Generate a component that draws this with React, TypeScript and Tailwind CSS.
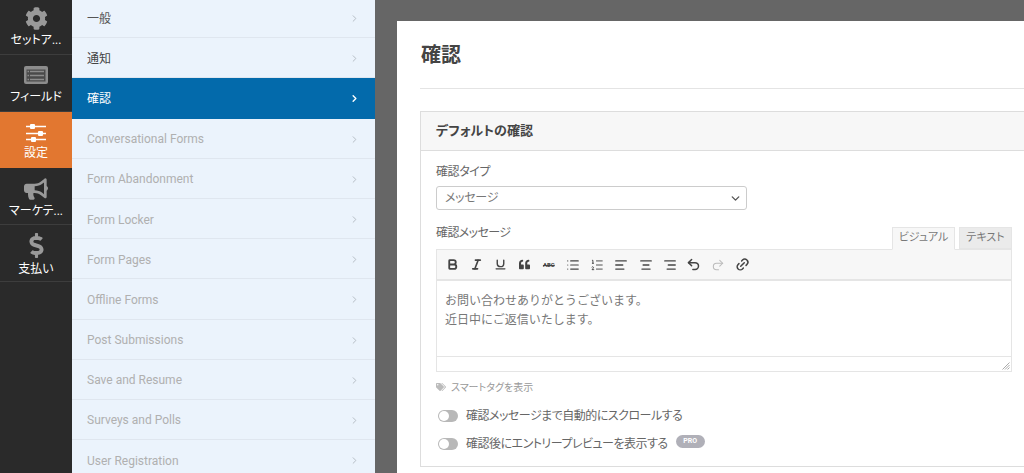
import React from "react";
import { FaCog, FaBullhorn, FaDollarSign, FaTags, FaQuoteLeft } from "react-icons/fa";
import { ChevronRight, ChevronDown, Bold, Italic, Underline, List, ListOrdered, AlignLeft, AlignCenter, AlignRight, Undo2, Redo2, Link2 } from "lucide-react";

const FONT = "font-['Roboto','Noto_Sans_CJK_JP',sans-serif] [font-feature-settings:'palt']";

function FormIcon() {
  return (
    <svg width="24" height="18" viewBox="0 0 24 18">
      <rect x="0" y="0" width="24" height="18" rx="2" fill="#8c8c8c" />
      <rect x="2.5" y="3.5" width="19" height="12" fill="#4a4a4a" />
      <path d="M6 5.5h14M6 9.5h14M6 13.5h14" stroke="#8c8c8c" strokeWidth="1.6" />
      <path d="M3.5 5.5h1.5M3.5 9.5h1.5M3.5 13.5h1.5" stroke="#8c8c8c" strokeWidth="1.6" />
    </svg>
  );
}

function SliderIcon() {
  return (
    <svg width="20" height="20" viewBox="0 0 20 20">
      <path d="M0 3.5h20M0 10.5h20M0 16.5h20" stroke="#fff" strokeWidth="1.4" />
      <rect x="4" y="1" width="5" height="5" rx="1" fill="#fff" />
      <rect x="12" y="8" width="5" height="5" rx="1" fill="#fff" />
      <rect x="5" y="14" width="5" height="5" rx="1" fill="#fff" />
    </svg>
  );
}

const side = [
  { label: "セットア...", icon: <FaCog size={23} className="text-[#999]" />, h: "h-[55px]", cls: "pt-[7px]", gap: "mt-[3px]" },
  { label: "フィールド", icon: <FormIcon />, h: "h-[57px]", cls: "pt-[11px]", gap: "mt-[6px]" },
  { label: "設定", icon: <SliderIcon />, h: "h-[56px]", active: true, cls: "pt-[11px]", gap: "mt-[3px]" },
  { label: "マーケテ...", icon: <FaBullhorn size={24} className="text-[#999]" />, h: "h-[57px]", cls: "pt-[9px]", gap: "mt-[3px]" },
  { label: "支払い", icon: <FaDollarSign size={25} className="text-[#999]" />, h: "h-[57px]", cls: "pt-[8px]", gap: "mt-[4px]" },
];

const nav = [
  { t: "一般", c: "text-[#555]" },
  { t: "通知", c: "text-[#444]" },
  { t: "確認", active: true },
  { t: "Conversational Forms" },
  { t: "Form Abandonment" },
  { t: "Form Locker" },
  { t: "Form Pages" },
  { t: "Offline Forms" },
  { t: "Post Submissions" },
  { t: "Save and Resume" },
  { t: "Surveys and Polls" },
  { t: "User Registration" },
];

function Toggle({ children }: { children: React.ReactNode }) {
  return (
    <div className="flex items-center h-[16px] pl-[2px]">
      <span className="relative w-[20px] h-[12px] rounded-full bg-[#b8b8b8] shrink-0">
        <span className="absolute left-[1px] top-[1px] w-[10px] h-[10px] rounded-full bg-white" />
      </span>
      <span className="ml-[8px] text-[12px] tracking-[-0.5px] text-[#666] leading-[16px]">{children}</span>
    </div>
  );
}

function Tool({ children, c = "text-[#444]" }: { children: React.ReactNode; c?: string }) {
  return <span className={`w-[24.2px] h-[14px] flex items-center justify-center ${c}`}>{children}</span>;
}

export default function App() {
  return (
    <div className={`w-[1024px] h-[473px] overflow-hidden flex bg-[#666] ${FONT}`}>
      <aside className="w-[72px] shrink-0 bg-[#2a2a2a] flex flex-col">
        {side.map(({ label, icon, h, active, cls, gap }) => (
          <div
            key={label}
            className={`${h} ${cls} flex flex-col items-center border-b ${active ? "bg-[#e27730] border-[#e27730] text-white" : "border-[#3d3d3d] text-white"}`}
          >
            {icon}
            <span className={`text-[12px] leading-[14px] ${gap} whitespace-nowrap`}>{label}</span>
          </div>
        ))}
      </aside>
      <nav className="w-[303px] shrink-0 bg-[#ebf3fc] flex flex-col -mt-[2px]">
        {nav.map(({ t, c, active }) => (
          <div
            key={t}
            className={`h-[40.2px] shrink-0 pt-[2px] flex items-center justify-between pl-[15px] pr-[15px] text-[12px] border-b ${active ? "bg-[#036aab] border-[#036aab] text-white" : `border-[#dfe6ef] ${c ?? "text-[#b0b0b0]"}`}`}
          >
            <span>{t}</span>
            <ChevronRight size={11} strokeWidth={active ? 3 : 2} className={active ? "text-white" : "text-[#b0b8c0]"} />
          </div>
        ))}
      </nav>
      <main className="flex-1 min-w-0 pl-[22px] pt-[21px]">
        <div className="w-[660px] h-[480px] bg-white pl-[23px] pt-[20px] text-[#444]">
          <h1 className="ml-[1px] text-[20px] font-bold leading-[28px] text-[#444]">確認</h1>
          <div className="w-[640px] mt-[19px] border-t border-[#e4e4e4]" />
          <section className="w-[607px] h-[356px] mt-[22px] border border-[#ddd]">
            <header className="h-[39px] bg-[#f7f7f7] border-b border-[#ddd] flex items-center pl-[15px] text-[13px] font-bold text-[#444]">
              デフォルトの確認
            </header>
            <div className="pl-[15px] pt-[13px]">
              <div className="text-[12px] tracking-[-0.4px] leading-[16px] text-[#666]">確認タイプ</div>
              <div className="mt-[6px] w-[311px] h-[24px] border border-[#ccc] rounded-[3px] flex items-center justify-between pl-[8px] pr-[4px] text-[12px] tracking-[-0.3px] text-[#777]">
                <span>メッセージ</span>
                <ChevronDown size={13} strokeWidth={2.5} className="text-[#555]" />
              </div>
              <div className="relative w-[576px] mt-[17px]">
                <div className="flex justify-between items-end h-[22px]">
                  <span className="text-[12px] tracking-[-0.6px] leading-[16px] text-[#666] mb-[8px]">確認メッセージ</span>
                  <div className="flex gap-[4px] -mb-[1px] relative z-10 pr-0">
                    <span className="w-[63px] h-[23px] bg-[#f7f7f7] border border-[#e5e5e5] border-b-[#f7f7f7] text-[11px] text-[#777] flex items-center justify-center">ビジュアル</span>
                    <span className="w-[53px] h-[22px] bg-[#ebebeb] border border-[#e5e5e5] text-[11px] text-[#777] flex items-center justify-center">テキスト</span>
                  </div>
                </div>
                <div className="border border-[#e5e5e5]">
                  <div className="h-[31px] bg-[#f7f7f7] border-b-2 border-[#e5e5e5] flex items-center pl-[3px]">
                    <Tool><Bold size={13} strokeWidth={3.4} /></Tool>
                    <Tool><Italic size={13} strokeWidth={3} /></Tool>
                    <Tool><Underline size={13} strokeWidth={2.6} /></Tool>
                    <Tool><FaQuoteLeft size={11} /></Tool>
                    <Tool><span className="text-[6px] font-bold line-through leading-none">ABC</span></Tool>
                    <Tool><List size={14} strokeWidth={2} /></Tool>
                    <Tool><ListOrdered size={14} strokeWidth={1.6} /></Tool>
                    <Tool><AlignLeft size={14} strokeWidth={2.2} /></Tool>
                    <Tool><AlignCenter size={14} strokeWidth={2.2} /></Tool>
                    <Tool><AlignRight size={14} strokeWidth={2.2} /></Tool>
                    <Tool><Undo2 size={15} strokeWidth={2.4} /></Tool>
                    <Tool c="text-[#bbb]"><Redo2 size={14} strokeWidth={1.8} /></Tool>
                    <Tool><Link2 size={15} strokeWidth={2.4} className="-rotate-45" /></Tool>
                  </div>
                  <div className="h-[75px] pl-[8px] pt-[11px] font-['Liberation_Serif','Noto_Sans_CJK_JP',serif] [font-feature-settings:normal] text-[12px] leading-[19px] text-[#777]">
                    <p>お問い合わせありがとうございます。</p>
                    <p>近日中にご返信いたします。</p>
                  </div>
                  <div className="relative h-[15px] border-t border-[#e5e5e5]">
                    <svg className="absolute right-[1px] bottom-[1px]" width="8" height="8" viewBox="0 0 8 8">
                      <path d="M7.5 0.5 L0.5 7.5 M7.5 3 L3 7.5 M7.5 5.5 L5.5 7.5" stroke="#aaa" strokeWidth="1" />
                    </svg>
                  </div>
                </div>
              </div>
              <div className="flex items-center mt-[9px] h-[12px] text-[10px] text-[#999]">
                <FaTags size={10} className="text-[#bbb]" />
                <span className="ml-[5px]">スマートタグを表示</span>
              </div>
              <div className="mt-[15px]"><Toggle>確認メッセージまで自動的にスクロールする</Toggle></div>
              <div className="mt-[12px] flex items-center">
                <Toggle>確認後にエントリープレビューを表示する</Toggle>
                <span className="ml-[8px] -mt-[5px] w-[29px] h-[13px] rounded-full bg-[#b0b0b8] text-white text-[7px] font-bold flex items-center justify-center">PRO</span>
              </div>
            </div>
          </section>
        </div>
      </main>
    </div>
  );
}
